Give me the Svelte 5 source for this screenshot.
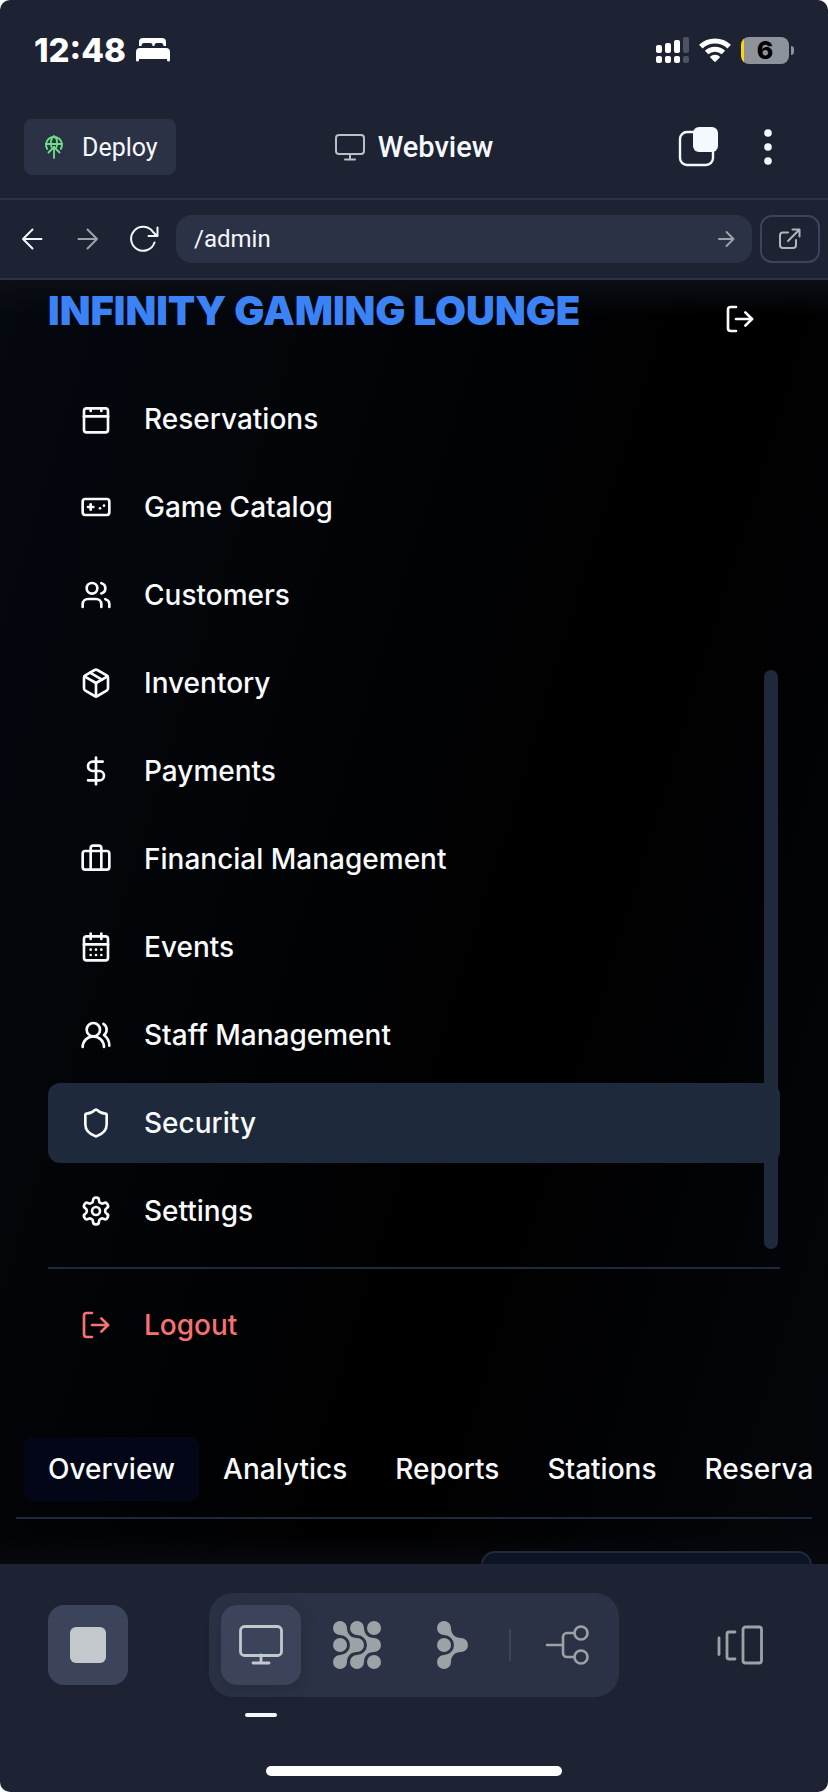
<script>
  const signOut = [
    'M9 21H5a2 2 0 0 1-2-2V5a2 2 0 0 1 2-2h4',
    'm16 17 5-5-5-5',
    'M21 12H9'
  ];

  const menu = [
    {
      label: 'Reservations',
      paths: ['M5 4h14a2 2 0 0 1 2 2v14a2 2 0 0 1-2 2H5a2 2 0 0 1-2-2V6a2 2 0 0 1 2-2z', 'M3 10h18', 'M8 4v2', 'M16 4v2']
    },
    {
      label: 'Game Catalog',
      paths: ['M4 6h16a2 2 0 0 1 2 2v8a2 2 0 0 1-2 2H4a2 2 0 0 1-2-2V8a2 2 0 0 1 2-2z', 'M6 12h4', 'M8 10v4', 'M15 13h.01', 'M18 11h.01']
    },
    {
      label: 'Customers',
      paths: ['M16 21v-2a4 4 0 0 0-4-4H6a4 4 0 0 0-4 4v2', 'M9 3a4 4 0 1 1 0 8 4 4 0 0 1 0-8z', 'M22 21v-2a4 4 0 0 0-3-3.87', 'M16 3.13a4 4 0 0 1 0 7.75']
    },
    {
      label: 'Inventory',
      paths: ['m7.5 4.27 9 5.15', 'M21 8a2 2 0 0 0-1-1.73l-7-4a2 2 0 0 0-2 0l-7 4A2 2 0 0 0 3 8v8a2 2 0 0 0 1 1.73l7 4a2 2 0 0 0 2 0l7-4A2 2 0 0 0 21 16Z', 'm3.3 7 8.7 5 8.7-5', 'M12 22V12']
    },
    {
      label: 'Payments',
      paths: ['M12 2v20', 'M17 5H9.5a3.5 3.5 0 0 0 0 7h5a3.5 3.5 0 0 1 0 7H6']
    },
    {
      label: 'Financial Management',
      paths: ['M16 20V4a2 2 0 0 0-2-2h-4a2 2 0 0 0-2 2v16', 'M4 6h16a2 2 0 0 1 2 2v10a2 2 0 0 1-2 2H4a2 2 0 0 1-2-2V8a2 2 0 0 1 2-2z']
    },
    {
      label: 'Events',
      paths: ['M8 2v4', 'M16 2v4', 'M5 4h14a2 2 0 0 1 2 2v14a2 2 0 0 1-2 2H5a2 2 0 0 1-2-2V6a2 2 0 0 1 2-2z', 'M3 10h18', 'M8 14h.01', 'M12 14h.01', 'M16 14h.01', 'M8 18h.01', 'M12 18h.01', 'M16 18h.01']
    },
    {
      label: 'Staff Management',
      paths: ['M18 21a8 8 0 0 0-16 0', 'M10 3a5 5 0 1 1 0 10 5 5 0 0 1 0-10z', 'M22 20c0-3.37-2-6.5-4-8a5 5 0 0 0-.45-8.3']
    },
    {
      label: 'Security',
      active: true,
      paths: ['M20 13c0 5-3.5 7.5-7.66 8.95a1 1 0 0 1-.67-.01C7.5 20.5 4 18 4 13V6a1 1 0 0 1 1-1c2 0 4.5-1.2 6.24-2.72a1.17 1.17 0 0 1 1.52 0C14.51 3.81 17 5 19 5a1 1 0 0 1 1 1z']
    },
    {
      label: 'Settings',
      paths: [
        'M12.22 2h-.44a2 2 0 0 0-2 2v.18a2 2 0 0 1-1 1.73l-.43.25a2 2 0 0 1-2 0l-.15-.08a2 2 0 0 0-2.73.73l-.22.38a2 2 0 0 0 .73 2.73l.15.1a2 2 0 0 1 1 1.72v.51a2 2 0 0 1-1 1.74l-.15.09a2 2 0 0 0-.73 2.73l.22.38a2 2 0 0 0 2.73.73l.15-.08a2 2 0 0 1 2 0l.43.25a2 2 0 0 1 1 1.73V20a2 2 0 0 0 2 2h.44a2 2 0 0 0 2-2v-.18a2 2 0 0 1 1-1.73l.43-.25a2 2 0 0 1 2 0l.15.08a2 2 0 0 0 2.73-.73l.22-.39a2 2 0 0 0-.73-2.73l-.15-.08a2 2 0 0 1-1-1.74v-.5a2 2 0 0 1 1-1.74l.15-.09a2 2 0 0 0 .73-2.73l-.22-.38a2 2 0 0 0-2.73-.73l-.15.08a2 2 0 0 1-2 0l-.43-.25a2 2 0 0 1-1-1.73V4a2 2 0 0 0-2-2z',
        'M12 9a3 3 0 1 1 0 6 3 3 0 0 1 0-6z'
      ]
    }
  ];

  const tabs = ['Overview', 'Analytics', 'Reports', 'Stations', 'Reservations'];
  const chevron = 'M14 7C14 13 18 17 24 17A7 7 0 0 1 24 31C18 31 14 35 14 41A7 7 0 1 1 7 34A10 10 0 0 0 7 14A7 7 0 1 1 14 7z';

  let address = $state('/admin');
  let currentTab = $state('Overview');
</script>

{#snippet icon(paths)}
  <svg class="icon" viewBox="0 0 24 24" width="32" height="32" aria-hidden="true">
    {#each paths as d}<path {d} />{/each}
  </svg>
{/snippet}

<div class="screen">
  <div class="status">
    <span class="time">12:48</span>
    <svg width="34" height="24" viewBox="0 0 34 24" fill="#fff" aria-hidden="true">
      <path d="M3 8V4a4 4 0 0 1 4-4h19a4 4 0 0 1 4 4v4h-2.500c0-2-1-3-2.500-3h-4c-2 0-2.500 1-2.500 3h-2c0-2-.5-3-2.500-3H8c-1.500 0-2.500 1-2.500 3z" />
      <path d="M4 10h26a4 4 0 0 1 4 4v8a1.500 1.500 0 0 1-3 0v-1H3v1a1.500 1.500 0 0 1-3 0v-8a4 4 0 0 1 4-4z" />
    </svg>
    <div class="signals">
      <svg width="33" height="26" viewBox="0 0 33 26" fill="#fff" aria-hidden="true">
        <rect x="0" y="8" width="6" height="8" rx="2" /><rect x="9" y="6" width="6" height="10" rx="2" />
        <rect x="18" y="3" width="6" height="13" rx="2" /><rect x="27" y="0" width="6" height="16" rx="2" fill="#4c5261" />
        <rect x="0" y="19" width="6" height="7" rx="2" /><rect x="9" y="19" width="6" height="7" rx="2" />
        <rect x="18" y="19" width="6" height="7" rx="2" /><rect x="27" y="19" width="6" height="7" rx="2" fill="#4c5261" />
      </svg>
      <svg width="32" height="24" viewBox="0 0 32 24" aria-hidden="true">
        <g fill="none" stroke="#fff" stroke-width="5"><path d="M1.800 8.600a20.500 20.500 0 0 1 28.400 0" /><path d="M7.600 14.500a12.200 12.200 0 0 1 16.800 0" /></g>
        <path d="M10.800 18.900a7.600 7.600 0 0 1 10.400 0L16.800 23.400a1.200 1.200 0 0 1-1.600 0z" fill="#fff" />
      </svg>
      <div class="battery"><span class="cell">6</span><span class="nub"></span></div>
    </div>
  </div>

  <header class="appbar">
    <button class="deploy">
      <svg width="20" height="26" viewBox="0 0 20 26" fill="none" stroke="#6fe089" stroke-width="1.800" stroke-linecap="round" stroke-linejoin="round" aria-hidden="true">
        <path d="M3.200 15A8 8 0 1 1 16.800 15" /><path d="M2 10h16" /><path d="M7.500 13C6.200 9 7 4.500 10 2c3 2.500 3.800 7 2.500 11" />
        <path d="M10 24V13" /><path d="m4.500 18.500 5.500-5.500 5.500 5.500" />
      </svg>
      Deploy
    </button>
    <h2>
      <svg width="30" height="28" viewBox="0 0 30 28" fill="none" stroke="#b9bfc3" stroke-width="2" stroke-linecap="round" aria-hidden="true">
        <rect x="1" y="2" width="28" height="19" rx="3" /><path d="M15 21v5M10 26.500h10" />
      </svg>
      Webview
    </h2>
    <div class="tools">
      <button class="plain" aria-label="Tabs">
        <svg width="40" height="40" viewBox="0 0 40 40" aria-hidden="true">
          <rect x="2" y="5" width="33" height="33" rx="7" fill="none" stroke="#f5f8fe" stroke-width="2.400" />
          <rect x="15" y="0" width="25" height="25" rx="6" fill="#f5f8fe" />
        </svg>
      </button>
      <button class="plain" aria-label="More">
        <svg width="8" height="36" viewBox="0 0 8 36" fill="#f5f8fe" aria-hidden="true"><circle cx="4" cy="4" r="3.800" /><circle cx="4" cy="18" r="3.800" /><circle cx="4" cy="32" r="3.800" /></svg>
      </button>
    </div>
  </header>

  <div class="urlbar">
    <button class="step" aria-label="Back">
      <svg width="24" height="24" viewBox="0 0 24 24" aria-hidden="true"><path d="M21.500 12H3M12.500 2.500 3 12l9.500 9.500" /></svg>
    </button>
    <button class="step dim" aria-label="Forward">
      <svg width="24" height="24" viewBox="0 0 24 24" aria-hidden="true"><path d="M2.500 12H21M11.500 2.500 21 12l-9.500 9.500" /></svg>
    </button>
    <button class="step" aria-label="Reload">
      <svg width="30" height="28" viewBox="0 0 30 28" aria-hidden="true"><path d="M25.500 17.500A12 12 0 1 1 24 7l4 4M28.500 2.500V11H19.500" /></svg>
    </button>
    <div class="address">
      <input type="text" aria-label="Address" bind:value={address} />
      <button class="plain dim" aria-label="Go">
        <svg width="18" height="18" viewBox="0 0 18 18" aria-hidden="true"><path d="M2 9h14.500M9.500 2l7 7-7 7" /></svg>
      </button>
    </div>
    <button class="open" aria-label="Open in new window">
      <svg width="24" height="24" viewBox="0 0 24 24" aria-hidden="true"><path d="M10 5.500H5a3 3 0 0 0-3 3V18a3 3 0 0 0 3 3h10a3 3 0 0 0 3-3v-5M10 14 21 3M14.500 2.500h7v7" /></svg>
    </button>
  </div>

  <main>
    <div class="brand">
      <h1>INFINITY GAMING LOUNGE</h1>
      <button class="exit" aria-label="Sign out">{@render icon(signOut)}</button>
    </div>

    <nav>
      {#each menu as item}
        <a href="#{item.label}" class:active={item.active}>{@render icon(item.paths)}{item.label}</a>
      {/each}
      <span class="thumb"></span>
    </nav>
    <div class="leave">
      <button>{@render icon(signOut)}Logout</button>
    </div>

    <div class="tabs" role="tablist">
      {#each tabs as tab}
        <button role="tab" aria-selected={tab === currentTab} onclick={() => (currentTab = tab)}>{tab}</button>
      {/each}
    </div>
    <section class="card"></section>
  </main>

  <footer>
    <div class="dock">
      <button class="key lit" aria-label="Stop"><span class="stop"></span></button>
      <div class="group">
        <button class="key lit current" aria-label="Webview">
          <svg width="44" height="40" viewBox="0 0 44 40" fill="none" stroke="#c2c8cc" stroke-width="2.800" stroke-linecap="round" aria-hidden="true">
            <rect x="1.500" y="1.500" width="41" height="29" rx="4" /><path d="M22 30v8M14 38h16" />
          </svg>
        </button>
        <button class="key" aria-label="Agent">
          <svg width="48" height="48" viewBox="0 0 48 48" fill="#9ca2a6" aria-hidden="true">
            <path d={chevron} /><path d={chevron} transform="translate(17 0)" />
            <circle cx="7" cy="24" r="7" /><circle cx="41" cy="7" r="7" /><circle cx="41" cy="41" r="7" />
          </svg>
        </button>
        <button class="key" aria-label="Assistant">
          <svg width="32" height="48" viewBox="0 0 32 48" fill="#9ca2a6" aria-hidden="true"><path d={chevron} /><circle cx="7" cy="24" r="7" /></svg>
        </button>
        <span class="rule"></span>
        <button class="key" aria-label="Branches">
          <svg width="44" height="40" viewBox="0 0 44 40" fill="none" stroke="#9ca2a6" stroke-width="2.600" stroke-linecap="round" aria-hidden="true">
            <path d="M2 20h16M29 8h-7a4 4 0 0 0-4 4v16a4 4 0 0 0 4 4h7" /><circle cx="36" cy="8" r="6.500" /><circle cx="36" cy="32" r="6.500" />
          </svg>
        </button>
      </div>
      <button class="key" aria-label="Switch panes">
        <svg width="46" height="40" viewBox="0 0 46 40" fill="none" stroke="#9ca2a6" stroke-width="2.800" stroke-linecap="round" aria-hidden="true">
          <rect x="26" y="2" width="18.500" height="36" rx="2.500" /><path d="M18 7h-6a2 2 0 0 0-2 2v23a2 2 0 0 0 2 2h6M2 13v16.500" />
        </svg>
      </button>
    </div>
    <span class="home"></span>
  </footer>
</div>

<style>
  :global(body) { margin: 0; background: #fff; }
  * { box-sizing: border-box; }
  button { font: inherit; color: inherit; border: 0; padding: 0; background: none; cursor: pointer; }
  h1, h2 { margin: 0; }
  svg { display: block; flex: none; }

  .screen {
    display: flex; flex-direction: column; height: 100vh; overflow: hidden;
    background: #1d2332; color: #f5f8fe; border-radius: 10px;
    font-family: Inter, "Liberation Sans", sans-serif;
  }

  .status { flex: none; display: flex; align-items: center; gap: 10px; height: 96px; padding: 4px 34px 0 34px; }
  .time { font-size: 33px; line-height: 40px; font-weight: 800; color: #fff; }
  .signals { margin-left: auto; display: flex; align-items: center; gap: 10px; }
  .battery { display: flex; align-items: center; gap: 2px; }
  .cell {
    width: 48px; height: 27px; border-radius: 8px; text-align: center;
    background: linear-gradient(90deg, #ffd60a 3px, #8e929b 3px);
    color: #000; font-size: 25px; line-height: 27px; font-weight: 800;
  }
  .nub { width: 3px; height: 9px; border-radius: 0 4px 4px 0; background: #8e929b; }

  .appbar {
    flex: none; display: grid; grid-template-columns: 1fr auto 1fr; align-items: center;
    height: 104px; padding: 0 24px; border-bottom: 2px solid #2b3245;
    font-family: Roboto, "Noto Sans", sans-serif;
  }
  .deploy {
    justify-self: start; display: flex; align-items: center; gap: 18px; height: 56px; padding: 0 18px 0 20px;
    border-radius: 8px; background: #2b3245; font-size: 25px;
  }
  h2 { display: flex; align-items: center; gap: 13px; font-size: 29px; line-height: 36px; font-weight: 500; }
  .tools { justify-self: end; display: flex; align-items: center; gap: 46px; padding-right: 32px; }

  .urlbar {
    flex: none; display: flex; align-items: center; gap: 8px; height: 80px; padding: 0 8px;
    border-bottom: 2px solid #2b3245;
  }
  .urlbar svg { fill: none; stroke: currentColor; stroke-width: 2; stroke-linecap: round; stroke-linejoin: round; }
  .step { width: 48px; height: 48px; display: grid; place-items: center; }
  .dim { color: #9ca2a6; }
  .address {
    flex: 1; min-width: 0; display: flex; align-items: center; height: 48px; padding: 0 17px 0 18px;
    border-radius: 16px; background: #2b3245;
  }
  .address input {
    flex: 1; min-width: 0; padding: 0; border: 0; outline: 0; background: none; color: inherit;
    font: 400 24px/32px Roboto, "Noto Sans", sans-serif;
  }
  .open {
    width: 60px; height: 48px; display: grid; place-items: center; border: 2px solid #3c445c;
    border-radius: 12px; color: #b0b6ba;
  }

  main {
    flex: 1; min-height: 0; overflow: hidden; font-size: 28px; font-weight: 500; color: #f8fafc;
    background:
      linear-gradient(180deg, #0b0e15 0, transparent 36px),
      linear-gradient(0deg, #07090d 0, transparent 30px),
      linear-gradient(107deg, #04080f 0%, #000 58%, #000 65%, #04060b 100%);
  }
  .icon { fill: none; stroke: currentColor; stroke-width: 2; stroke-linecap: round; stroke-linejoin: round; }
  .brand { display: flex; justify-content: space-between; padding: 0 48px; }
  h1 { padding-top: 7px; font-size: 40px; line-height: 48px; font-weight: 900; color: #3b82f6; white-space: nowrap; }
  .exit { width: 80px; height: 78px; display: grid; place-items: center; }

  nav { position: relative; display: flex; flex-direction: column; gap: 8px; margin: 21px 48px 16px; }
  nav a, .leave button {
    display: flex; align-items: center; gap: 32px; width: 100%; height: 80px; padding: 0 32px;
    border-radius: 12px; color: inherit; text-decoration: none; white-space: nowrap;
  }
  nav a.active { background: #1e293b; }
  .thumb { position: absolute; right: 2px; bottom: 2px; width: 14px; height: 579px; border-radius: 7px; background: #1e293b; }
  .leave { margin: 0 48px; padding-top: 16px; border-top: 2px solid #1e293b; color: #f87171; }

  .tabs { display: flex; overflow: hidden; margin: 72px 16px 32px; padding: 0 8px 16px; border-bottom: 2px solid #1e293b; }
  .tabs button { flex: none; height: 64px; padding: 0 24px; border-radius: 8px; }
  .tabs button[aria-selected='true'] { background: #020617; }
  .card { width: 40%; height: 160px; margin: 0 16px 0 auto; border: 2px solid #1e293b; border-radius: 14px; background: #0a1424; }

  footer { flex: none; display: flex; flex-direction: column; align-items: center; padding: 29px 48px 16px; }
  .dock { width: 100%; display: flex; align-items: center; justify-content: space-between; }
  .group { display: flex; align-items: center; gap: 16px; padding: 12px; border-radius: 24px; background: #2b3245; }
  .key { width: 80px; height: 80px; display: grid; place-items: center; border-radius: 16px; }
  .lit { background: #3c445c; }
  .stop { width: 36px; height: 36px; border-radius: 6px; background: #c2c8cc; }
  .current { position: relative; box-shadow: 0 4px 16px rgba(20, 24, 40, 0.25); }
  .current::after {
    content: ''; position: absolute; left: 24px; bottom: -32px; width: 32px; height: 4px;
    border-radius: 2px; background: #f5f8fe;
  }
  .rule { width: 2px; height: 32px; background: #3c445c; }
  .home { width: 296px; height: 10px; margin-top: 69px; border-radius: 5px; background: #fff; }
</style>
